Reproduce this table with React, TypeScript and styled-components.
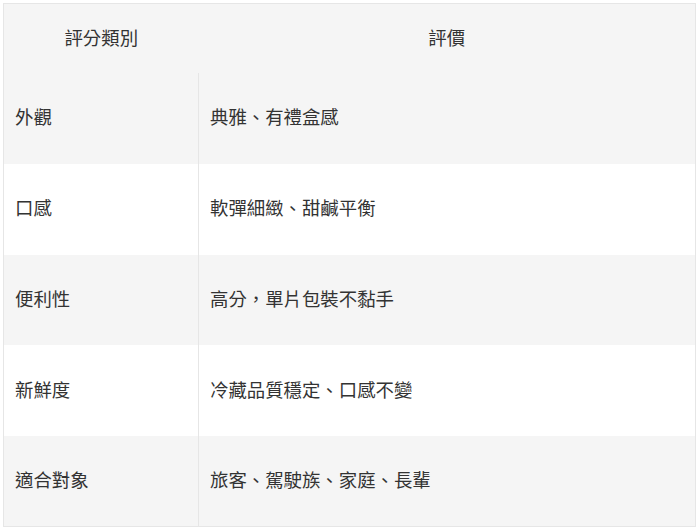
import styled, { createGlobalStyle } from 'styled-components';

const rows = [
	['外觀', '典雅、有禮盒感'],
	['口感', '軟彈細緻、甜鹹平衡'],
	['便利性', '高分，單片包裝不黏手'],
	['新鮮度', '冷藏品質穩定、口感不變'],
	['適合對象', '旅客、駕駛族、家庭、長輩'],
];

export default function App() {
	return (
		<>
			<GlobalStyle />
			<Page>
				<Table>
					<colgroup>
						<col style={{ width: '195px' }} />
						<col />
					</colgroup>
					<thead>
						<HeadRow>
							<HeadCell>評分類別</HeadCell>
							<HeadCell>評價</HeadCell>
						</HeadRow>
					</thead>
					<tbody>
						{rows.map(([category, review], i) => (
							<BodyRow key={category} $shaded={i % 2 === 0}>
								<Cell>{category}</Cell>
								<Cell $divided>{review}</Cell>
							</BodyRow>
						))}
					</tbody>
				</Table>
			</Page>
		</>
	);
}

const GlobalStyle = createGlobalStyle`
	body {
		margin: 0;
		background: #ffffff;
		font-family: "Noto Sans CJK TC", "Noto Sans", sans-serif;
		color: #333333;
	}
`;

const Page = styled.div({
	padding: '3px 2px 3px 3px',
});

const Table = styled.table({
	width: '693px',
	borderCollapse: 'collapse',
	tableLayout: 'fixed',
	border: '1px solid #e6e6e6',
	fontSize: '18.4px',
});

const HeadRow = styled.tr({
	height: '69.5px',
	backgroundColor: '#f5f5f5',
});

const HeadCell = styled.th({
	padding: '0 12px 4px',
	fontWeight: 400,
	textAlign: 'center',
	verticalAlign: 'middle',
	lineHeight: '24px',
});

const BodyRow = styled.tr<{ $shaded: boolean }>(({ $shaded }) => ({
	height: '90.8px',
	backgroundColor: $shaded ? '#f5f5f5' : '#ffffff',
}));

const Cell = styled.td<{ $divided?: boolean }>(({ $divided }) => ({
	padding: '0 11px 4px',
	verticalAlign: 'middle',
	lineHeight: '24px',
	borderLeft: $divided ? '1px solid #e6e6e6' : 'none',
}));
